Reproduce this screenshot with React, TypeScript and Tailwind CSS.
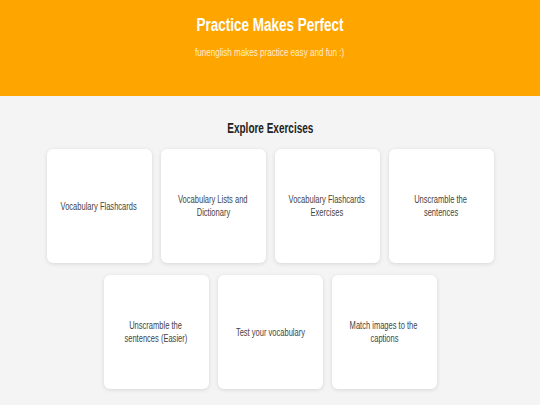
import React from "react";

const cards1: string[][] = [
  ["Vocabulary Flashcards"],
  ["Vocabulary Lists and", "Dictionary"],
  ["Vocabulary Flashcards", "Exercises"],
  ["Unscramble the", "sentences"],
];
const cards2: string[][] = [
  ["Unscramble the", "sentences (Easier)"],
  ["Test your vocabulary"],
  ["Match images to the", "captions"],
];

function Card({ lines }: { lines: string[] }) {
  return (
    <div className="w-[105px] h-[114px] bg-white rounded-[6px] shadow-[0_1px_4px_rgba(0,0,0,0.12)] flex flex-col items-center justify-center">
      {lines.map((l, i) => (
        <span
          key={i}
          className="inline-block whitespace-nowrap text-[11px] leading-[13px] text-[#444] scale-x-[0.685]"
        >
          {l}
        </span>
      ))}
    </div>
  );
}

export default function App() {
  return (
    <div
      className="w-[540px] h-[405px] overflow-hidden bg-[#f4f4f4]"
      style={{ fontFamily: '"Liberation Sans", Arial, sans-serif' }}
    >
      <header className="h-[96px] bg-[#ffa500] flex flex-col items-center pt-[14px]">
        <span className="inline-block whitespace-nowrap text-[18px] leading-[22px] font-bold text-white scale-x-[0.75]">
          Practice Makes Perfect
        </span>
        <span className="mt-[9px] inline-block whitespace-nowrap text-[11px] leading-[14px] text-[#ffedcc] scale-x-[0.735]">
          funenglish makes practice easy and fun :)
        </span>
      </header>
      <main className="flex flex-col items-center pt-[24px]">
        <span className="inline-block whitespace-nowrap text-[14px] leading-[17px] font-bold text-[#222] scale-x-[0.713]">
          Explore Exercises
        </span>
        <div className="mt-[12px] flex flex-col items-center gap-[12px]">
          <div className="flex gap-[9px]">
            {cards1.map((c, i) => (
              <Card key={i} lines={c} />
            ))}
          </div>
          <div className="flex gap-[9px]">
            {cards2.map((c, i) => (
              <Card key={i} lines={c} />
            ))}
          </div>
        </div>
      </main>
    </div>
  );
}
